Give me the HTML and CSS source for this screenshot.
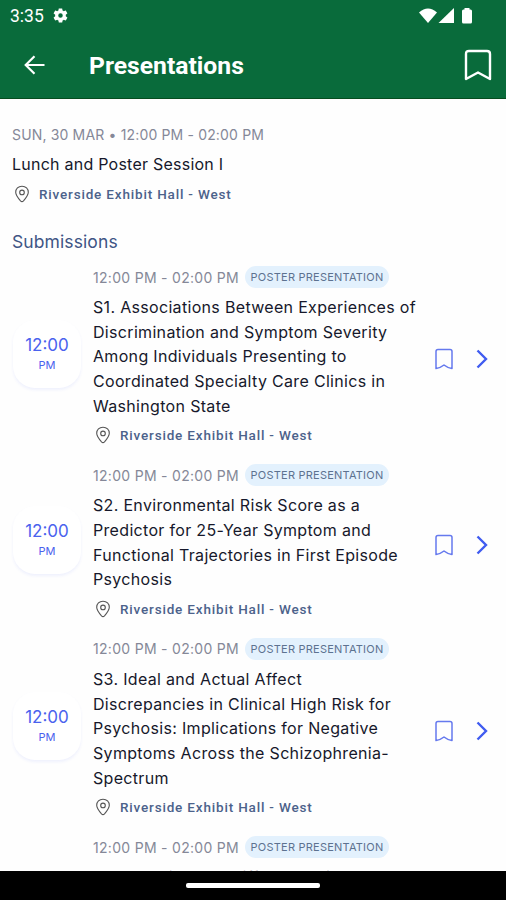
FILE: index.html
```html
<!DOCTYPE html>
<html lang="en">
<head>
    <meta charset="UTF-8">
    <meta name="viewport" content="width=device-width, initial-scale=1.0">
    <title>Presentations</title>
    <link rel="stylesheet" href="styles.css">
</head>
<body>

<svg class="symbols">
    <symbol id="pin" viewBox="0 0 16 18">
        <path d="M8 1.2c-3.8 0-6.3 2.7-6.3 6.1 0 2.800 1.700 5 4.800 8.600q1.500 1.500 3 0c3.100-3.600 4.800-5.800 4.800-8.600C14.300 3.900 11.800 1.200 8 1.200z"/>
        <circle cx="8" cy="7.400" r="2.300"/>
    </symbol>
    <symbol id="bookmark" viewBox="0 0 20 24">
        <path d="M2 21.500V4.500q0-2 2-2h12q2 0 2 2v17q-5-1-8-3.500-3 2.500-8 3.500z"/>
    </symbol>
    <symbol id="chevron" viewBox="0 0 12 20">
        <path d="M1.500 1.500l8.500 8.500-8.500 8.500"/>
    </symbol>
</svg>

<header class="app-bar">
    <div class="status">
        <span class="clock">3:35</span>
        <svg class="gear" viewBox="0 0 24 24"><path fill-rule="evenodd" d="M19.430 13c.1-.7.1-1.300 0-2l2.100-1.700c.2-.1.2-.4.1-.6l-2-3.500c-.1-.2-.4-.3-.6-.2l-2.500 1c-.5-.4-1.100-.7-1.700-1l-.4-2.600c0-.2-.2-.4-.5-.4h-4c-.2 0-.4.2-.5.4L9.100 5c-.6.300-1.200.6-1.700 1l-2.500-1c-.2-.1-.5 0-.6.200l-2 3.500c-.1.200-.1.500.1.600L4.500 11c-.1.700-.1 1.300 0 2l-2.100 1.700c-.2.100-.2.400-.1.600l2 3.500c.1.200.4.300.6.200l2.500-1c.5.400 1.100.7 1.700 1l.4 2.600c0 .2.200.4.500.4h4c.2 0 .4-.2.500-.4l.4-2.600c.6-.3 1.200-.6 1.700-1l2.500 1c.2.100.5 0 .6-.2l2-3.500c.1-.2.100-.5-.1-.6zM12 15.200a3.200 3.200 0 1 1 0-6.400 3.200 3.200 0 0 1 0 6.400z"/></svg>
        <svg class="signal" viewBox="0 0 56 18">
            <path d="M1 5.500Q10 -2.500 19 5.500L10 16z"/>
            <path d="M36 1v15H20.500z"/>
            <path d="M46.500 1h5v1.500h1q1.500 0 1.500 1.500v11q0 1.500-1.500 1.500h-7q-1.500 0-1.500-1.500V4q0-1.500 1.500-1.500h1z"/>
        </svg>
    </div>
    <div class="toolbar">
        <svg class="back" viewBox="0 0 22 20"><path d="M20.500 10H2M10.500 1.200L1.700 10l8.800 8.800"/></svg>
        <h1>Presentations</h1>
        <svg class="save" viewBox="0 0 28 32"><path d="M2 30V5q0-3 3-3h18q3 0 3 3v25l-12-6.500z"/></svg>
    </div>
</header>

<main>
    <section class="session">
        <p class="date">SUN, 30 MAR • 12:00 PM - 02:00 PM</p>
        <h2>Lunch and Poster Session I</h2>
        <p class="place"><svg><use href="#pin"/></svg>Riverside Exhibit Hall - West</p>
        <h3>Submissions</h3>
    </section>

    <article class="item">
        <div class="slot">12:00<small>PM</small></div>
        <div class="info">
            <p class="meta"><span class="hours">12:00 PM - 02:00 PM</span><span class="tag">POSTER PRESENTATION</span></p>
            <h4>S1. Associations Between Experiences of<br>Discrimination and Symptom Severity<br>Among Individuals Presenting to<br>Coordinated Specialty Care Clinics in<br>Washington State</h4>
            <p class="place"><svg><use href="#pin"/></svg>Riverside Exhibit Hall - West</p>
        </div>
        <svg class="mark"><use href="#bookmark"/></svg>
        <svg class="next"><use href="#chevron"/></svg>
    </article>

    <article class="item">
        <div class="slot">12:00<small>PM</small></div>
        <div class="info">
            <p class="meta"><span class="hours">12:00 PM - 02:00 PM</span><span class="tag">POSTER PRESENTATION</span></p>
            <h4>S2. Environmental Risk Score as a<br>Predictor for 25-Year Symptom and<br>Functional Trajectories in First Episode<br>Psychosis</h4>
            <p class="place"><svg><use href="#pin"/></svg>Riverside Exhibit Hall - West</p>
        </div>
        <svg class="mark"><use href="#bookmark"/></svg>
        <svg class="next"><use href="#chevron"/></svg>
    </article>

    <article class="item">
        <div class="slot">12:00<small>PM</small></div>
        <div class="info">
            <p class="meta"><span class="hours">12:00 PM - 02:00 PM</span><span class="tag">POSTER PRESENTATION</span></p>
            <h4>S3. Ideal and Actual Affect<br>Discrepancies in Clinical High Risk for<br>Psychosis: Implications for Negative<br>Symptoms Across the Schizophrenia-<br>Spectrum</h4>
            <p class="place"><svg><use href="#pin"/></svg>Riverside Exhibit Hall - West</p>
        </div>
        <svg class="mark"><use href="#bookmark"/></svg>
        <svg class="next"><use href="#chevron"/></svg>
    </article>

    <article class="item">
        <div class="slot-space"></div>
        <div class="info">
            <p class="meta"><span class="hours">12:00 PM - 02:00 PM</span><span class="tag">POSTER PRESENTATION</span></p>
            <h4>S4. Experimental Differences in</h4>
        </div>
    </article>
</main>

<footer class="nav-bar"><span class="handle"></span></footer>

</body>
</html>
```

FILE: styles.css
```css
* {
    box-sizing: border-box;
}

body {
    margin: 0;
    height: 900px;
    display: flex;
    flex-direction: column;
    overflow: hidden;
    background-color: #fefefe;
    font-family: Inter, "Liberation Sans", sans-serif;
    color: #16182b;
}

h1, h2, h3, h4, p {
    margin: 0;
    font-weight: 400;
    white-space: nowrap;
}

svg {
    flex: none;
    fill: none;
}

.symbols {
    position: absolute;
    width: 0;
    height: 0;
}

.app-bar {
    flex: none;
    height: 99px;
    background-color: #096b3b;
    border-bottom: 1px solid #064d1f;
    color: #fff;
    font-family: Roboto, sans-serif;
}

.status {
    display: flex;
    align-items: center;
    height: 32px;
    padding: 0 32px 0 10px;
}

.clock {
    width: 42px;
    font-size: 17.5px;
}

.gear {
    width: 17px;
    height: 17px;
    margin-top: -1px;
    fill: #fff;
}

.signal {
    width: 56px;
    height: 18px;
    margin-left: auto;
    margin-top: -1px;
    fill: #fff;
}

.toolbar {
    display: flex;
    align-items: center;
    height: 66px;
    padding: 0 14px 0 24px;
}

.back {
    width: 22px;
    height: 20px;
    stroke: #fff;
    stroke-width: 2.2;
}

.toolbar h1 {
    margin-left: 43px;
    font-size: 24.7px;
    font-weight: 700;
}

.save {
    width: 28px;
    height: 32px;
    margin-left: auto;
    stroke: #fff;
    stroke-width: 2.4;
    stroke-linejoin: round;
}

main {
    flex: 1;
    min-height: 0;
    overflow: hidden;
}

.session {
    height: 161px;
    padding: 25px 12px 0;
}

.date {
    font-size: 14px;
    line-height: 22px;
    letter-spacing: 0.16px;
    color: #858898;
}

.session h2 {
    margin-top: 6px;
    font-size: 16px;
    line-height: 24px;
    letter-spacing: 0.24px;
}

.place {
    display: flex;
    align-items: center;
    height: 20px;
    padding-left: 2px;
    font-family: Roboto, sans-serif;
    font-size: 13.5px;
    font-weight: 500;
    letter-spacing: 0.82px;
    color: #4c628b;
}

.place svg {
    width: 16px;
    height: 18px;
    margin-right: 9px;
    stroke: #555;
    stroke-width: 1.1;
}

.session .place {
    margin-top: 8px;
}

.session h3 {
    margin-top: 26px;
    font-size: 17.5px;
    line-height: 24px;
    letter-spacing: 0.1px;
    color: #3f5585;
}

.item {
    display: flex;
    align-items: center;
    padding: 6px 18px 13px 13px;
}

.slot {
    display: flex;
    flex-direction: column;
    align-items: center;
    justify-content: center;
    width: 68px;
    height: 68px;
    margin-bottom: 3px;
    padding-top: 2px;
    border-radius: 22px;
    background-color: #fff;
    box-shadow: 0 2px 3px rgba(70, 90, 240, 0.08);
    font-size: 17px;
    line-height: 20px;
    color: #4a62ee;
}

.slot small {
    font-size: 11px;
}

.slot-space {
    width: 68px;
}

.info {
    width: 340px;
    margin-left: 12px;
}

.meta {
    display: flex;
    align-items: center;
    height: 22px;
}

.hours {
    width: 152px;
    font-size: 14px;
    letter-spacing: 0.3px;
    color: #858898;
}

.tag {
    width: 144px;
    height: 22px;
    border-radius: 11px;
    background-color: #e3f1fd;
    font-size: 11px;
    line-height: 22px;
    letter-spacing: 0.22px;
    text-align: center;
    color: #5d7290;
}

.info h4 {
    margin-top: 7px;
    font-size: 16px;
    line-height: 24.65px;
    letter-spacing: 0.32px;
}

.info .place {
    margin-top: 7px;
}

.mark {
    width: 20px;
    height: 24px;
    margin-top: 7px;
    margin-left: 1px;
    stroke: #6579ee;
    stroke-width: 1.5;
    stroke-linejoin: round;
}

.next {
    width: 12px;
    height: 20px;
    margin-top: 7px;
    margin-left: auto;
    stroke: #405cf0;
    stroke-width: 2.4;
}

.nav-bar {
    display: flex;
    flex: none;
    justify-content: center;
    height: 29px;
    padding-top: 12px;
    background-color: #000;
}

.handle {
    width: 134px;
    height: 5px;
    border-radius: 2px;
    background-color: #fff;
}
```
